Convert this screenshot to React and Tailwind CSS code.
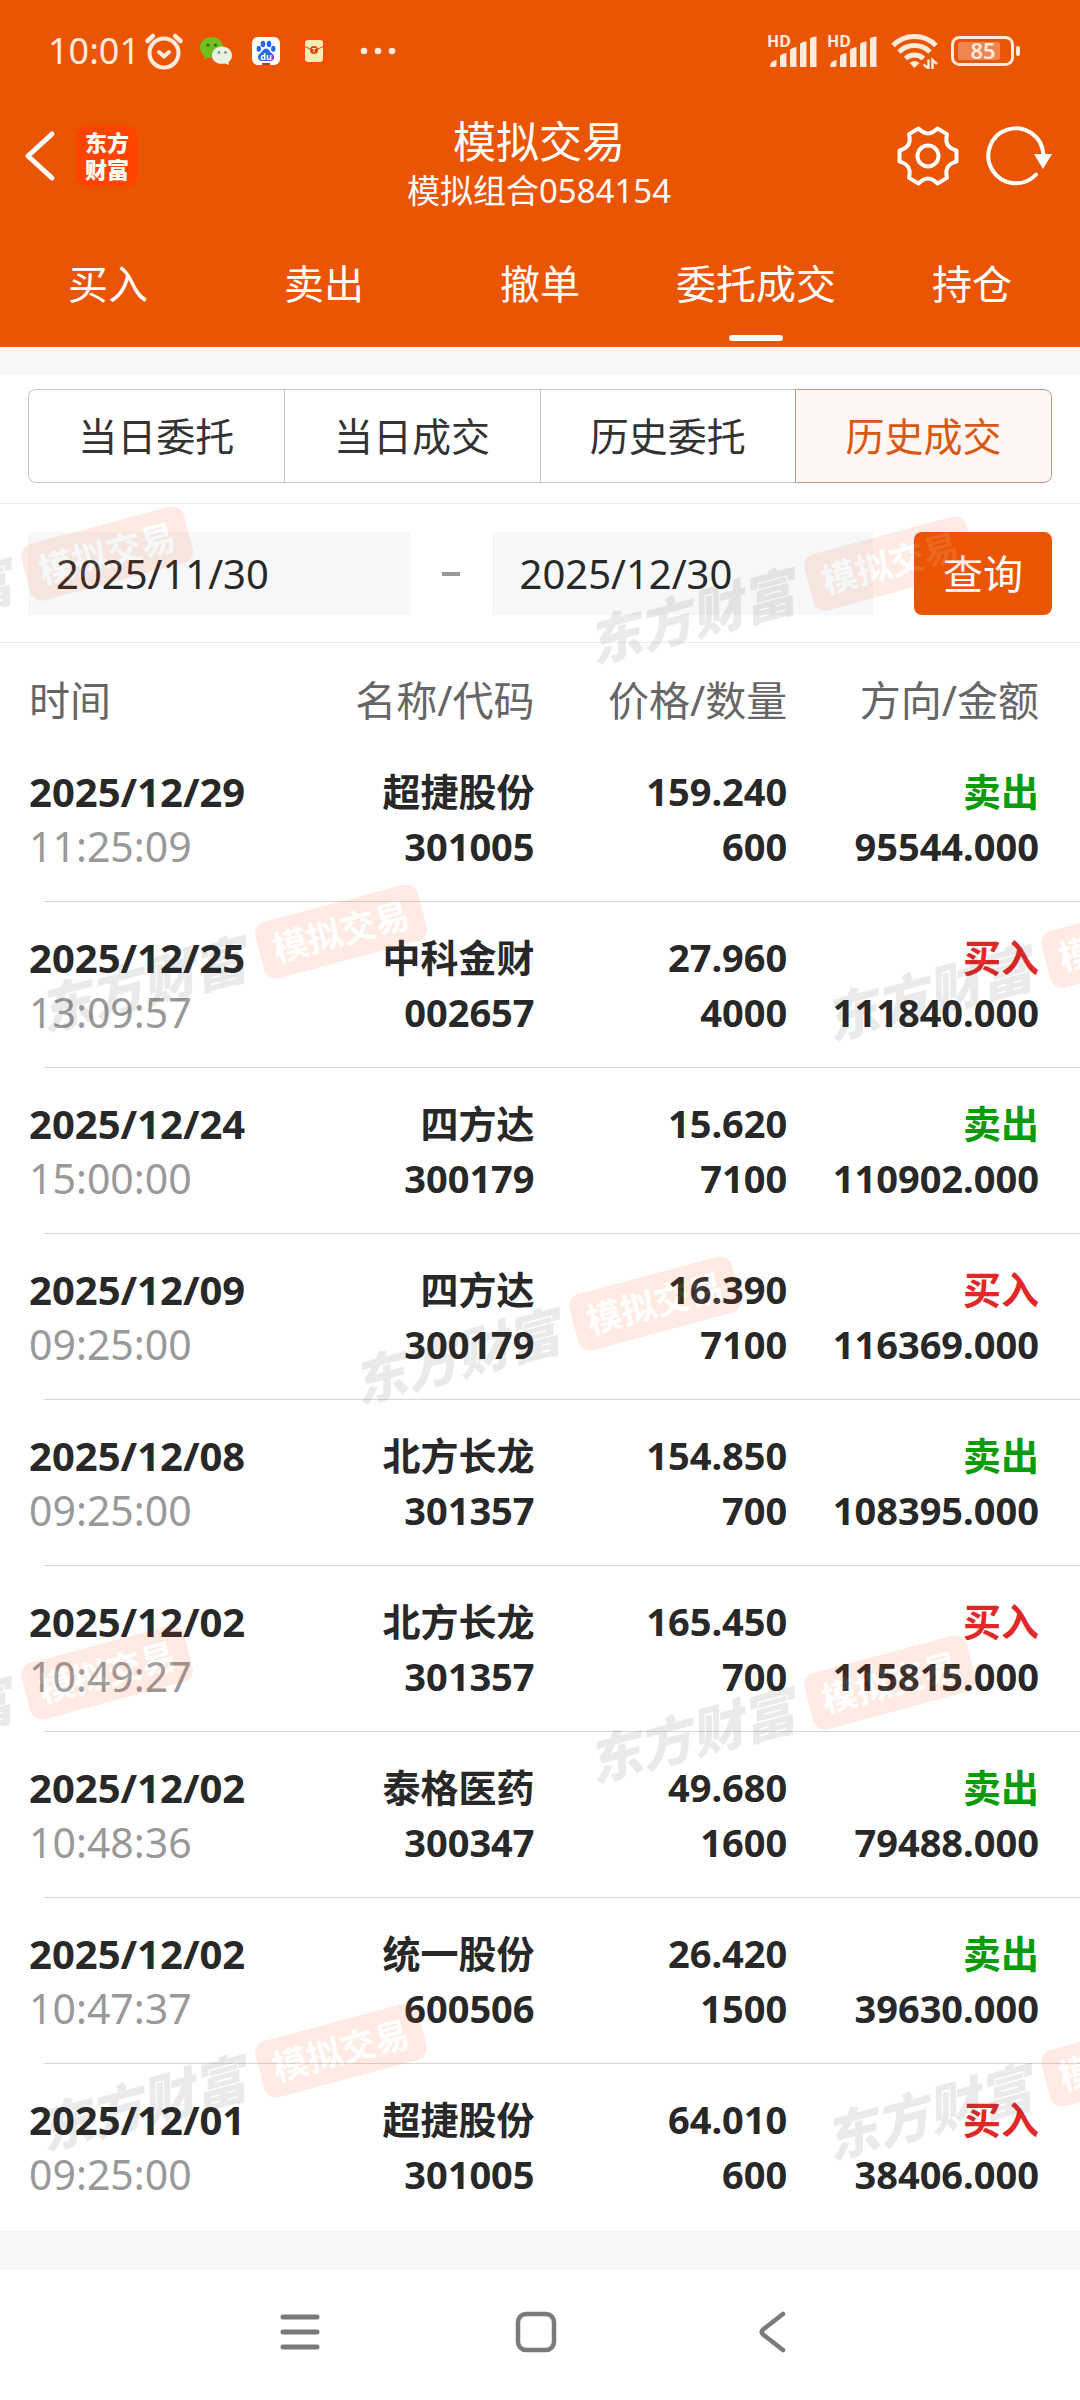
import React, { useState } from "react";

const trades = [
  { date: "2025/12/29", time: "11:25:09", name: "超捷股份", code: "301005", price: "159.240", qty: "600", side: "卖出", amount: "95544.000" },
  { date: "2025/12/25", time: "13:09:57", name: "中科金财", code: "002657", price: "27.960", qty: "4000", side: "买入", amount: "111840.000" },
  { date: "2025/12/24", time: "15:00:00", name: "四方达", code: "300179", price: "15.620", qty: "7100", side: "卖出", amount: "110902.000" },
  { date: "2025/12/09", time: "09:25:00", name: "四方达", code: "300179", price: "16.390", qty: "7100", side: "买入", amount: "116369.000" },
  { date: "2025/12/08", time: "09:25:00", name: "北方长龙", code: "301357", price: "154.850", qty: "700", side: "卖出", amount: "108395.000" },
  { date: "2025/12/02", time: "10:49:27", name: "北方长龙", code: "301357", price: "165.450", qty: "700", side: "买入", amount: "115815.000" },
  { date: "2025/12/02", time: "10:48:36", name: "泰格医药", code: "300347", price: "49.680", qty: "1600", side: "卖出", amount: "79488.000" },
  { date: "2025/12/02", time: "10:47:37", name: "统一股份", code: "600506", price: "26.420", qty: "1500", side: "卖出", amount: "39630.000" },
  { date: "2025/12/01", time: "09:25:00", name: "超捷股份", code: "301005", price: "64.010", qty: "600", side: "买入", amount: "38406.000" },
];

const tabs = ["买入", "卖出", "撤单", "委托成交", "持仓"];
const segments = ["当日委托", "当日成交", "历史委托", "历史成交"];

// centre of every watermark, from the top of the main area
const watermarks = [
  "left-[-3px] top-[236px]",
  "left-[780px] top-[246px]",
  "left-[231px] top-[614px]",
  "left-[1017px] top-[623px]",
  "left-[545px] top-[986px]",
  "left-[-3px] top-[1355px]",
  "left-[780px] top-[1365px]",
  "left-[231px] top-[1733px]",
  "left-[1017px] top-[1742px]",
];

const polar = (r, deg) => {
  const a = (deg * Math.PI) / 180;
  return `${(r * Math.cos(a)).toFixed(2)} ${(r * Math.sin(a)).toFixed(2)}`;
};

const gearPath =
  [0, 60, 120, 180, 240, 300]
    .map(
      (d, i) =>
        `${i === 0 ? "M" : "L"}${polar(29, d - 11)} L${polar(29, d + 11)} L${polar(26, d + 15)} Q${polar(20, d + 30)} ${polar(26, d + 45)}`
    )
    .join(" ") + " Z";

const AlarmIcon = () => (
  <svg width="40" height="38" viewBox="0 0 40 38" fill="none" stroke="#ffeadb" strokeWidth="4" strokeLinecap="round" strokeLinejoin="round">
    <circle cx="20" cy="21" r="14.5" />
    <path d="M15 20 L20 24.500 L25 20" />
    <path d="M3.500 9 L9 4 M36.500 9 L31 4" strokeWidth="4.500" />
  </svg>
);

const WechatIcon = () => (
  <svg width="32" height="28" viewBox="0 0 32 28">
    <path d="M11.500 0 C5 0 0 4.500 0 10.500 C0 14 1.800 17 4.500 19 L3.500 22.500 L8 20.500 C15 22.500 23 18 23 10.500 C23 4.500 18 0 11.500 0 Z" fill="#72bf22" />
    <path d="M22 9.500 C16.500 9.500 12 13.300 12 18.500 C12 24.500 18 28 25 26.500 L29 28 L28.500 25 C31 23.500 32 21 32 18.500 C32 13.300 27.500 9.500 22 9.500 Z" fill="#e8f1e2" />
    <circle cx="8" cy="8" r="1.600" fill="#2f6a0c" />
    <circle cx="15.500" cy="8" r="1.600" fill="#2f6a0c" />
    <circle cx="19" cy="15.500" r="1.300" fill="#6f8565" />
    <circle cx="25.500" cy="15.500" r="1.300" fill="#6f8565" />
  </svg>
);

const BaiduIcon = () => (
  <svg width="28" height="28" viewBox="0 0 28 28">
    <rect width="28" height="28" rx="6" fill="#fff" />
    <g fill="#2468e8">
      <ellipse cx="6.800" cy="11.800" rx="2.200" ry="3" />
      <ellipse cx="11" cy="7" rx="2.300" ry="3.200" />
      <ellipse cx="17" cy="7" rx="2.300" ry="3.200" />
      <ellipse cx="21.300" cy="11.800" rx="2.200" ry="3" />
      <path d="M14 11.500 C11 11.500 10.500 15 8 16.500 C4.500 19 6 24 10 24 H18 C22 24 23.500 19 20 16.500 C17.500 15 17 11.500 14 11.500 Z" />
    </g>
    <path d="M14 24 H18 C22 24 22.500 20 21.500 18.500 Z" fill="#8a3fe0" />
    <text x="14" y="22.500" textAnchor="middle" fontSize="9" fontWeight="700" fill="#fff" fontFamily="Noto Sans, sans-serif">du</text>
    <rect x="10" y="26" width="8" height="2" fill="#c0392b" />
  </svg>
);

const EnvelopeIcon = () => (
  <svg width="28" height="28" viewBox="0 0 28 28">
    <rect width="28" height="28" rx="1" fill="#fa4a08" />
    <rect x="5" y="3" width="18" height="22" rx="3" fill="#ffe9b4" />
    <path d="M5 9.500 L14 14 L23 9.500" fill="none" stroke="#b8501c" strokeWidth="1" />
    <circle cx="14" cy="13" r="4" fill="#d9480f" />
    <path d="M12 11.500 H16 M14 11.500 V15.500" stroke="#ffe0a0" strokeWidth="1.200" />
  </svg>
);

const SignalIcon = () => (
  <svg width="52" height="46" viewBox="0 -6 52 46" fill="#ffeadb">
    <text x="0" y="13" fontSize="16" fontWeight="700" fontFamily="Noto Sans, sans-serif">HD</text>
    <path d="M3 33 Q3 27 9.500 26 V31 Q9.500 33 7.500 33 Z" />
    <path d="M13 22 Q14 20 19.500 19 V33 H13 Z" />
    <path d="M23 16 Q24 14 29.500 13 V33 H23 Z" />
    <path d="M33 10 Q34 8 39.500 7.500 V33 H33 Z" />
    <path d="M43 4.500 Q44 3 49.500 2.500 V33 H43 Z" />
  </svg>
);

const WifiIcon = () => (
  <svg width="48" height="36" viewBox="0 0 48 36" fill="none" stroke="#ffeadb" strokeWidth="5">
    <path d="M2 12.500 A30 30 0 0 1 45 12.500" />
    <path d="M8 19 A22 22 0 0 1 39 19" />
    <path d="M14.500 25.500 A13.500 13.500 0 0 1 32.500 25.500" />
    <path d="M18.500 30 Q23.500 26 28.500 30 L23.500 35 Z" fill="#ffeadb" stroke="none" />
    <path d="M37.500 26.500 V35.500 L32.500 31.500 M41.500 36 V27 L46 31" strokeWidth="2.500" />
  </svg>
);

const BatteryIcon = () => (
  <svg width="70" height="30" viewBox="0 0 70 30">
    <rect x="1.500" y="1.500" width="60" height="27" rx="7" fill="none" stroke="#ffeadb" strokeWidth="3" />
    <rect x="7" y="6" width="42" height="18" rx="2" fill="#f08550" />
    <rect x="65" y="10" width="4" height="10" rx="2" fill="#ffeadb" />
    <text x="32" y="23" textAnchor="middle" fontSize="22" fontWeight="600" fill="#ffeadb" fontFamily="Noto Sans, sans-serif">85</text>
  </svg>
);

const StatusBar = () => (
  <div className="flex h-[102px] items-center pr-[59px] pl-12">
    <span className="text-[36px] leading-[48px] text-[#ffeadb]">10:01</span>
    <div className="ml-1 flex items-center">
      <AlarmIcon />
      <div className="ml-4 flex items-center gap-5">
        <WechatIcon />
        <BaiduIcon />
        <EnvelopeIcon />
      </div>
      <svg className="ml-8" width="36" height="8" viewBox="0 0 36 8" fill="#ffeadb">
        <circle cx="4" cy="4" r="3.300" />
        <circle cx="18" cy="4" r="3.300" />
        <circle cx="32" cy="4" r="3.300" />
      </svg>
    </div>
    <div className="ml-auto flex items-center">
      <div className="mr-3 flex gap-2">
        <SignalIcon />
        <SignalIcon />
      </div>
      <WifiIcon />
      <div className="ml-3">
        <BatteryIcon />
      </div>
    </div>
  </div>
);

const TitleBar = () => (
  <div className="grid grid-cols-[1fr_auto_1fr] items-start pt-3 pr-[26px] pl-6">
    <div className="flex h-[84px] items-center gap-5">
      <button type="button" aria-label="返回">
        <svg width="32" height="52" viewBox="0 0 32 52" fill="none" stroke="#fff" strokeWidth="5" strokeLinecap="round" strokeLinejoin="round">
          <path d="M28 4 L4 26 L28 48" />
        </svg>
      </button>
      <div className="flex h-[62px] w-[62px] flex-col items-center justify-center rounded-xl bg-[#ff4400] text-[22px] leading-[27px] font-black text-white">
        <span>东方</span>
        <span>财富</span>
      </div>
    </div>
    <div className="text-center text-white">
      <h1 className="text-[43px] leading-[56px]">模拟交易</h1>
      <p className="text-[33px] leading-[42px]">模拟组合0584154</p>
    </div>
    <div className="flex h-[84px] items-center justify-end gap-6">
      <button type="button" aria-label="设置">
        <svg width="64" height="64" viewBox="-32 -32 64 64" fill="none" stroke="#fff" strokeWidth="4" strokeLinejoin="round">
          <path d={gearPath} />
          <circle r="10.500" />
        </svg>
      </button>
      <button type="button" aria-label="刷新">
        <svg width="70" height="64" viewBox="-32 -32 70 64" fill="none" stroke="#fff" strokeWidth="4" strokeLinecap="round">
          <path d="M20 18.500 A27.500 27.500 0 1 1 27.300 -2" />
          <path d="M18 -2 H36 L27 13 Z" fill="#fff" stroke="none" />
        </svg>
      </button>
    </div>
  </div>
);

const MainTabs = ({ active, onChange }) => (
  <nav className="grid grid-cols-5">
    {tabs.map((tab) => (
      <button
        key={tab}
        type="button"
        onClick={() => onChange(tab)}
        className="flex flex-col items-center pt-11 pb-[6px] text-[40px] leading-[56px] text-white"
      >
        {tab}
        <span className={tab === active ? "mt-[23px] h-[6px] w-[54px] rounded-full bg-white" : "mt-[23px] h-[6px]"} />
      </button>
    ))}
  </nav>
);

const Segments = ({ active, onChange }) => (
  <div className="border-b border-[#ececec] px-7 pt-[14px] pb-5">
    <div className="flex">
      {segments.map((item) => (
        <button
          key={item}
          type="button"
          onClick={() => onChange(item)}
          className={`h-[94px] flex-1 border-y border-l text-[39px] leading-[56px] first:rounded-l-lg last:rounded-r-lg last:border-r ${
            item === active ? "border-[#c09a84] bg-[#fff5f2] text-[#d9580f]" : "border-[#c8c8c8] text-[#333]"
          }`}
        >
          {item}
        </button>
      ))}
    </div>
  </div>
);

const DateField = ({ label, value, onChange }) => (
  <input
    type="text"
    aria-label={label}
    value={value}
    onChange={(e) => onChange(e.target.value)}
    className="h-[83px] min-w-0 flex-1 bg-[#f6f7f9] px-7 text-[40px] text-[#282828] outline-none"
  />
);

// every cell draws its own piece of the line, so that the first one can be inset
const cell = "relative py-7 after:absolute after:right-0 after:bottom-0 after:h-px after:bg-[#d6d6d6] group-last:after:hidden";

const TradeTable = () => (
  <table className="w-full table-fixed">
    <colgroup>
      <col className="w-[30%]" />
      <col className="w-[19.5%]" />
      <col className="w-[23.4%]" />
      <col className="w-[27.1%]" />
    </colgroup>
    <thead>
      <tr className="text-right text-[41px] leading-[56px] whitespace-nowrap text-[#666]">
        <th className="pt-[29px] pb-2 pl-[29px] text-left font-normal">时间</th>
        <th className="pt-[29px] pb-2 font-normal">名称/代码</th>
        <th className="pt-[29px] pb-2 font-normal">价格/数量</th>
        <th className="pt-[29px] pr-[41px] pb-2 font-normal">方向/金额</th>
      </tr>
    </thead>
    <tbody>
      {trades.map((t) => (
        <tr key={t.date + t.time} className="group text-right text-[38px] leading-[55px] font-bold whitespace-nowrap text-[#282828]">
          <td className={`${cell} pl-[29px] text-left after:left-11`}>
            <div className="text-[40px]">{t.date}</div>
            <div className="text-[41px] font-normal text-[#999]">{t.time}</div>
          </td>
          <td className={`${cell} after:left-0`}>
            <div>{t.name}</div>
            <div>{t.code}</div>
          </td>
          <td className={`${cell} after:left-0`}>
            <div>{t.price}</div>
            <div>{t.qty}</div>
          </td>
          <td className={`${cell} pr-[41px] after:left-0`}>
            <div className={t.side === "卖出" ? "text-[#0a9b0a]" : "text-[#e02828]"}>{t.side}</div>
            <div>{t.amount}</div>
          </td>
        </tr>
      ))}
    </tbody>
  </table>
);

const Watermarks = () => (
  <div className="pointer-events-none absolute inset-0 overflow-hidden" aria-hidden="true">
    {watermarks.map((pos) => (
      <div
        key={pos}
        className={`absolute flex -translate-x-1/2 -translate-y-1/2 -rotate-15 items-center gap-4 whitespace-nowrap opacity-10 ${pos}`}
      >
        <span className="text-[53px] leading-[56px] font-black text-[#3a3a3a] italic">东方财富</span>
        <span className="flex h-[58px] w-[168px] items-center justify-center rounded-xl bg-[#ff4400] text-[35px] font-bold text-white">
          模拟交易
        </span>
      </div>
    ))}
  </div>
);

const SystemNav = () => (
  <div className="flex h-[130px] items-center justify-center bg-white pr-2 pb-[6px]">
    <button type="button" aria-label="最近任务" className="flex w-[236px] justify-center">
      <svg width="40" height="42" viewBox="0 0 40 42" stroke="#7a7a7a" strokeWidth="5" strokeLinecap="round">
        <path d="M3 6 H37 M3 21 H37 M3 36 H37" />
      </svg>
    </button>
    <button type="button" aria-label="主屏幕" className="flex w-[236px] justify-center">
      <svg width="42" height="42" viewBox="0 0 42 42" fill="none" stroke="#7a7a7a" strokeWidth="4.500">
        <rect x="3" y="3" width="36" height="36" rx="8" />
      </svg>
    </button>
    <button type="button" aria-label="返回上一页" className="flex w-[236px] justify-center">
      <svg width="28" height="42" viewBox="0 0 28 42" fill="none" stroke="#7a7a7a" strokeWidth="4.500" strokeLinecap="round" strokeLinejoin="round">
        <path d="M25 3 L5 18.500 Q2.500 21 5 23.500 L25 39" />
      </svg>
    </button>
  </div>
);

const App = () => {
  const [tab, setTab] = useState("委托成交");
  const [segment, setSegment] = useState("历史成交");
  const [from, setFrom] = useState("2025/11/30");
  const [to, setTo] = useState("2025/12/30");

  return (
    <div className="w-full bg-[#f6f7f9] font-['Noto_Sans','Noto_Sans_CJK_SC',sans-serif]">
      <header className="bg-[#ea5504]">
        <StatusBar />
        <TitleBar />
        <MainTabs active={tab} onChange={setTab} />
      </header>
      <main className="relative pt-7 pb-10">
        <div className="bg-white">
          <Segments active={segment} onChange={setSegment} />
          <form
            className="flex items-center border-b border-[#ececec] px-7 pt-7 pb-[27px]"
            onSubmit={(e) => e.preventDefault()}
          >
            <DateField label="开始日期" value={from} onChange={setFrom} />
            <div className="flex w-[82px] justify-center">
              <span className="h-1 w-[18px] bg-[#999]" />
            </div>
            <DateField label="结束日期" value={to} onChange={setTo} />
            <button type="submit" className="ml-[41px] h-[83px] w-[138px] rounded-lg bg-[#ea5504] text-[40px] text-white">
              查询
            </button>
          </form>
          <TradeTable />
        </div>
        <Watermarks />
      </main>
      <SystemNav />
    </div>
  );
};

export default App;
